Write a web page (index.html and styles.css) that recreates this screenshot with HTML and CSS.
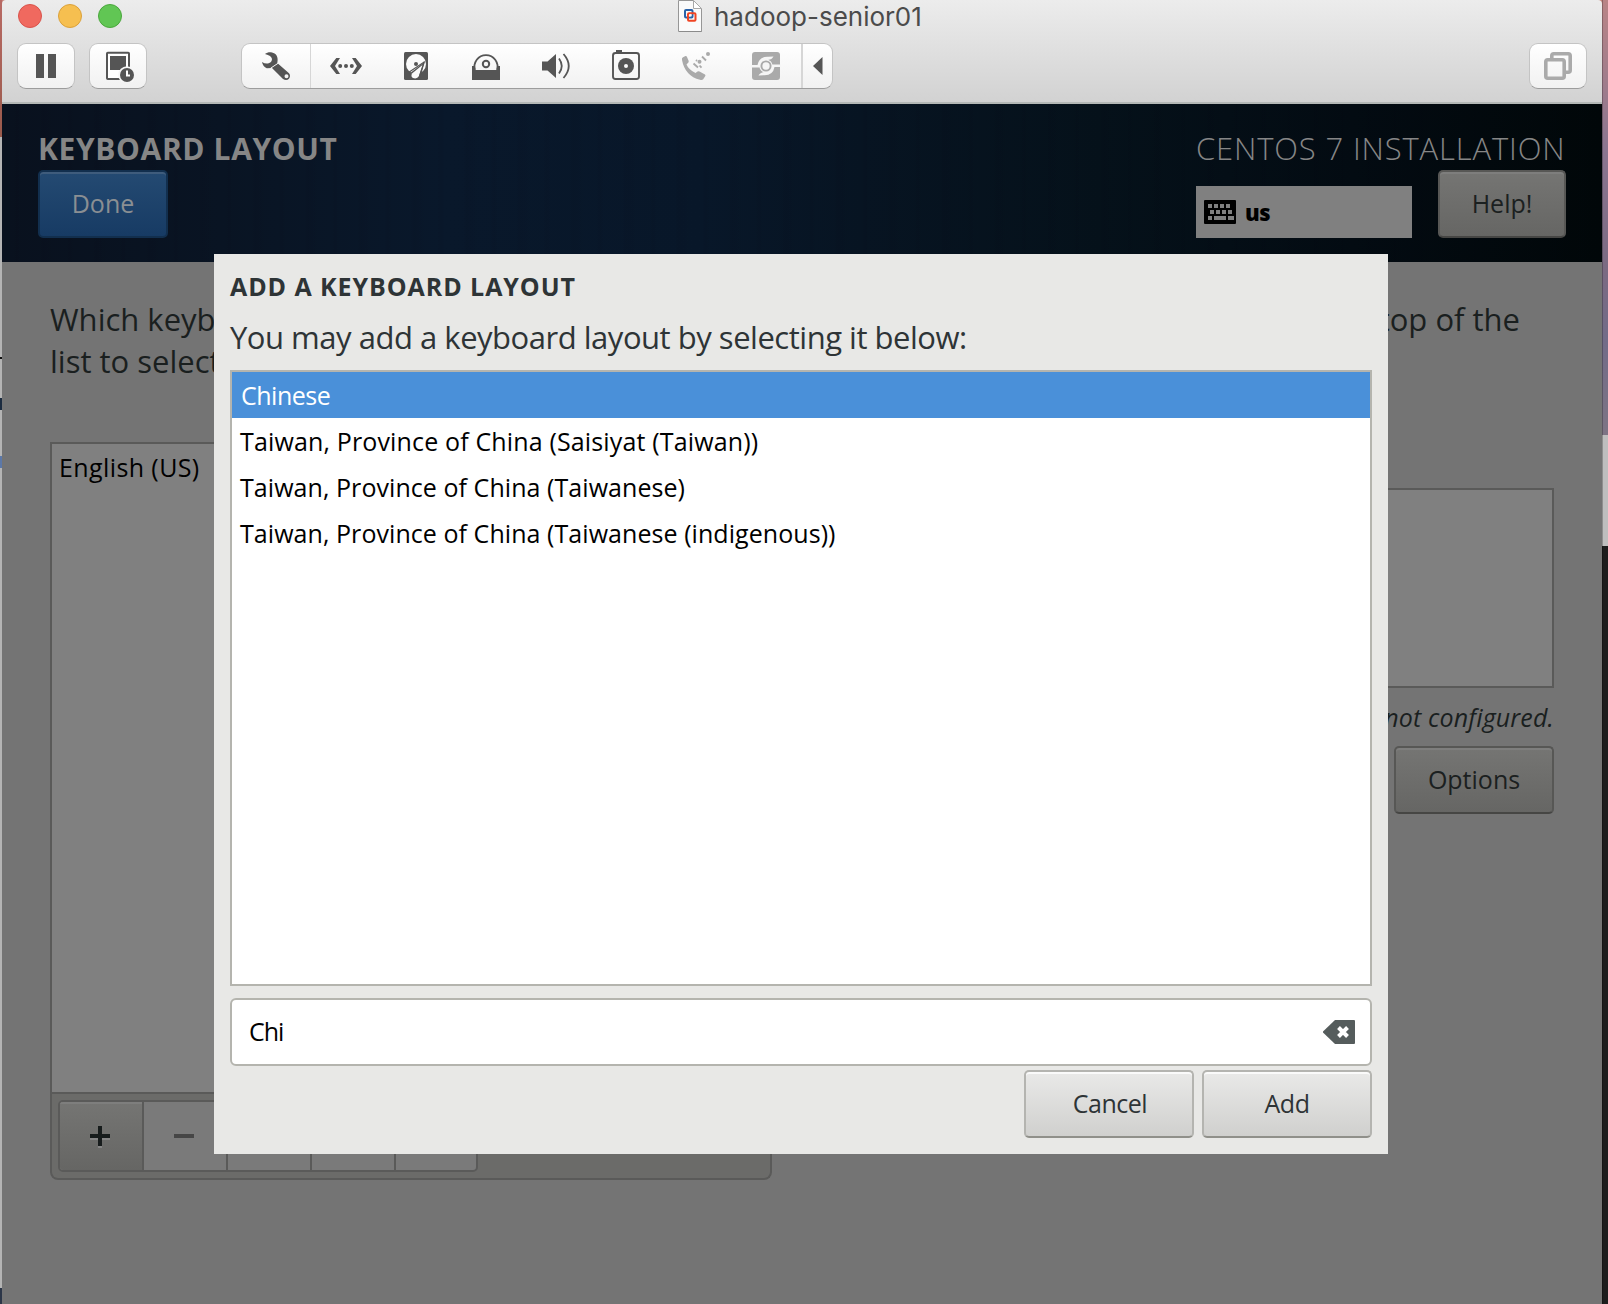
FILE: index.html
```html
<!DOCTYPE html>
<html lang="en">
<head>
<meta charset="utf-8">
<title>hadoop-senior01</title>
<link rel="stylesheet" href="styles.css">
</head>
<body>
<div class="desktop">
  <div class="edge-left"></div>
  <div class="window">
    <header class="chrome">
      <div class="titlebar">
        <div class="lights"><span class="light red"></span><span class="light yellow"></span><span class="light green"></span></div>
        <div class="title">
          <svg class="doc" width="24" height="32" viewBox="0 0 24 32"><path d="M.5.5H15.500L23.500 9V31.500H.5Z" fill="#fafafa" stroke="#969696"/><path d="M15.500.5V8.500H23.500Z" fill="#fff" stroke="#a8a8a8"/><path d="M1 31.500H23.500" stroke="#8b8b8b"/><rect x="7" y="10" width="7.500" height="7.500" rx="1" fill="none" stroke="#2a62a8" stroke-width="2"/><rect x="10" y="13.300" width="7.500" height="7.500" rx="1" fill="none" stroke="#f04423" stroke-width="2"/><path d="M11.200 16l2.200-1.400" stroke="#fafafa" stroke-width="1.800"/></svg>
          <span class="title-text">hadoop-senior01</span>
        </div>
      </div>
      <div class="toolbar">
        <div class="tool"><svg width="32" height="32" viewBox="0 0 32 32" fill="#555"><path d="M6 4h8v24H6zM18 4h8v24h-8z"/></svg></div>
        <div class="tool snapshot"><svg width="32" height="32" viewBox="0 0 32 32"><path d="M5 3.500q0-.8.8-.8H26.200q.8 0 .8.8V28.300q0 .8-.8.8H5.800q-.8 0-.8-.8Z" fill="#fff" stroke="#555" stroke-width="2"/><path d="M8 6H24V20H8Z" fill="#555"/><circle cx="25" cy="25" r="8.800" fill="#f7f7f7"/><circle cx="25" cy="25" r="7" fill="#555"/><path d="M25 20.500V25.500H28" fill="none" stroke="#fff" stroke-width="2"/></svg></div>
        <div class="devices">
          <div class="cell first"><svg width="32" height="32" viewBox="0 0 32 32" fill="#555"><path fill-rule="evenodd" d="M5 4C7 2.500 9.500 1.800 12 2.500C16 3.300 18 6.500 17.600 10.500L17.300 13L29 23.300Q31 26 29 28.700Q26.500 31 23 29L12 18L6.800 18.200Q3 17 2 12Q5 14 8 13.500Q12 12.500 12 9Q11.500 5.500 5 4ZM26.500 24.300A2 2 0 1 0 26.500 28.300A2 2 0 1 0 26.500 24.300Z"/><path d="M10.500 18.300L18.200 13.200" stroke="#fafafa" stroke-width="1"/></svg></div>
          <div class="cell"><svg width="32" height="32" viewBox="0 0 32 32" fill="#555"><path d="M6.300 8H10L5 16l5 8H6.300L0 16ZM25.700 8H22l5 8-5 8h3.700L32 16Z"/><circle cx="10.200" cy="16" r="2"/><circle cx="16" cy="16" r="2"/><circle cx="21.800" cy="16" r="2"/></svg></div>
          <div class="cell"><svg width="32" height="32" viewBox="0 0 32 32"><rect x="4" y="2" width="24" height="28" rx="1.500" fill="#555"/><circle cx="16" cy="14" r="10" fill="#fafafa"/><path d="M9 24L25 11.500L20 28H10Z" fill="#555"/><path d="M23 14.500L19 26Q17 29.500 13 28Q10.500 26.500 12 23.500Z" fill="#fafafa"/><circle cx="16" cy="14" r="2" fill="#555"/><path d="M8.500 22.500L24 12L19.500 26" fill="none" stroke="#555" stroke-width="1.100"/></svg></div>
          <div class="cell"><svg width="32" height="32" viewBox="0 0 32 32"><path d="M5 20A11.500 11.500 0 1 1 27 20" fill="none" stroke="#555" stroke-width="1.800"/><circle cx="16" cy="14" r="3.200" fill="none" stroke="#555" stroke-width="2"/><path d="M2 16H4V20H28V16H30V30H2Z" fill="#555"/></svg></div>
          <div class="cell"><svg width="32" height="32" viewBox="0 0 32 32"><path d="M2 11.500H7.500L16 4V28L7.500 20.500H2Z" fill="#555"/><path d="M19 8.500Q24.500 16 19 23.500M23.500 4Q34 16 23.500 28" fill="none" stroke="#555" stroke-width="1.800"/></svg></div>
          <div class="cell"><svg width="32" height="32" viewBox="0 0 32 32"><path d="M6 0h6v3H6z" fill="#555"/><rect x="3" y="3" width="26" height="26" rx="2.500" fill="none" stroke="#555" stroke-width="1.900"/><circle cx="16" cy="16" r="8" fill="#555"/><circle cx="16" cy="16" r="2" fill="#fafafa"/></svg></div>
          <div class="cell"><svg width="32" height="32" viewBox="0 0 32 32" fill="#aaa"><path d="M2 10Q1.500 8 3 7.200L5.500 6Q6.500 5.700 7 7L8.700 11Q9 12.500 7.700 13.300L6.500 14.500Q8.500 19.500 15.500 23L17.500 21.500Q18.300 20.800 19.500 21.500L25 24.500Q26 25.300 25 26.500L23 29.500Q22 30.300 20 29.800Q5 26 2 10Z"/><circle cx="19.500" cy="11.700" r="2"/><circle cx="28" cy="3.900" r="2"/><path d="M13.500 13.500l4.500 4M19.500 15.500l2 2.200M16 10l1 1M22 6.500l4 4" stroke="#aaa" stroke-width="1.800"/></svg></div>
          <div class="cell"><svg width="32" height="32" viewBox="0 0 32 32"><rect x="2" y="2" width="28" height="28" rx="3" fill="#aaa"/><circle cx="16" cy="16" r="6.600" fill="#f6f6f6"/><path d="M1 15H7.500Q9 6.500 18 6.800L23.500 6.500Q22 9.500 18 10L10 17.500H1ZM31 17H24.500Q23 25.500 14 25.200L8.500 25.500Q10 22.500 14 22L22 14.500H31Z" fill="#f6f6f6"/><circle cx="16" cy="16" r="4.600" fill="#f6f6f6" stroke="#aaa" stroke-width="1.900"/></svg></div>
          <div class="cell last"><svg width="10" height="18" viewBox="0 0 10 18"><path d="M0 9L9.500 0V18Z" fill="#555"/></svg></div>
        </div>
        <div class="tool full"><svg width="32" height="32" viewBox="0 0 32 32" fill="none" stroke="#aaa" stroke-width="3.600"><path d="M9.800 9V5.800q0-2 2-2H26.200q2 0 2 2V20.200q0 2-2 2H23"/><rect x="3.800" y="9.800" width="18.400" height="18.400" rx="2"/></svg></div>
      </div>
    </header>

    <main class="screen">
      <section class="banner">
        <div class="banner-left">
          <h1 class="spoke">KEYBOARD LAYOUT</h1>
          <button class="btn done">Done</button>
        </div>
        <div class="banner-right">
          <div class="product">CENTOS 7 INSTALLATION</div>
          <div class="banner-row">
            <div class="indicator">
              <svg width="32" height="24" viewBox="0 0 32 24"><rect width="32" height="24" rx="1" fill="#000"/><path d="M4 4h4v4H4zM10 4h4v4h-4zM16 4h4v4h-4zM22 4h4v4h-4zM6 10h4v4H6zM12 10h4v4h-4zM18 10h4v4h-4zM24 10h4v4h-4zM4 16h4v4H4zM10 16h12v4H10zM24 16h6v4h-6z" fill="#808080"/></svg>
              <span class="us">us</span>
            </div>
            <button class="btn dim help">Help!</button>
          </div>
        </div>
      </section>
      <section class="content">
        <div class="question">
          <p>Which keyb<br>list to select</p>
          <p class="question-end">top of the</p>
        </div>
        <div class="columns">
          <div class="layouts">
            <div class="layout-list"><span class="english">English (US)</span></div>
            <div class="layout-bar">
              <div class="bar-buttons">
                <span class="bar-btn plus"><svg width="20" height="22" viewBox="0 0 20 22"><path d="M0 10H8V2h4v8h8v4h-8v8H8v-8H0Z" fill="#858585"/><path d="M0 8H8V0h4v8h8v4h-8v8H8v-8H0Z" fill="#171c1c"/></svg></span>
                <span class="bar-btn"><svg width="20" height="4"><path d="M0 0h20v4H0z" fill="#464646"/></svg></span>
                <span class="bar-btn"></span><span class="bar-btn"></span><span class="bar-btn"></span>
              </div>
            </div>
          </div>
          <div class="testing">
            <div class="test-area"></div>
            <div class="switching">not configured.</div>
            <button class="btn dim options">Options</button>
          </div>
        </div>
      </section>

      <section class="dialog">
        <h2 class="dialog-title">ADD A KEYBOARD LAYOUT</h2>
        <p class="dialog-text">You may add a keyboard layout by selecting it below:</p>
        <ul class="results">
          <li class="row selected">Chinese</li>
          <li class="row saisiyat">Taiwan, Province of China (Saisiyat (Taiwan))</li>
          <li class="row">Taiwan, Province of China (Taiwanese)</li>
          <li class="row">Taiwan, Province of China (Taiwanese (indigenous))</li>
        </ul>
        <div class="entry">
          <span class="query">Chi</span>
          <svg width="32" height="24" viewBox="0 0 32 24"><path d="M12 0H31q1 0 1 1V23q0 1-1 1H12L0 12.500V11.500Z" fill="#555c5c"/><path d="M15.500 7.500l9 9M24.500 7.500l-9 9" stroke="#fff" stroke-width="4"/></svg>
        </div>
        <div class="actions">
          <button class="btn light-btn cancel">Cancel</button>
          <button class="btn light-btn add">Add</button>
        </div>
      </section>
    </main>
  </div>
  <div class="edge-right"></div>
</div>
</body>
</html>
```

FILE: styles.css
```css
* { box-sizing: border-box; }
body { margin: 0; font-family: "Open Sans", "Noto Sans", sans-serif; }
svg { display: block; flex: none; }
h1, h2, p, ul { margin: 0; padding: 0; font-weight: normal; }

.desktop {
  display: grid;
  grid-template-columns: 2px 1600px 6px;
  height: 1304px;
  overflow: hidden;
  background: #c4827a;
}
.edge-left {
  background:
    linear-gradient(transparent 357px, #111 357px 359px, transparent 359px 398px, #1c2c40 398px 410px, transparent 410px 456px, #5c78a8 456px 468px, transparent 468px),
    linear-gradient(#b86a64 0, #9a5a4c 137px, #b4b4b4 137px, #b4b4b4 1288px, #2c3648 1288px);
}
.edge-right {
  border-left: 1px solid rgba(0, 0, 0, .25);
  background: linear-gradient(#b98486 0, #8b7590 150px, #7b6a82 270px, #726c88 340px, #7d7484 435px, #bebebe 435px, #bebebe 546px, #1d1d1d 546px);
}
.window { display: flex; flex-direction: column; }

/* window chrome */
.chrome {
  height: 104px;
  border-bottom: 2px solid #b4b8b6;
  border-radius: 4px 4px 0 0;
  background: linear-gradient(#ececec, #d2d2d2);
}
.titlebar { display: flex; height: 43px; }
.lights { display: flex; gap: 16px; width: 676px; padding: 4px 0 0 16px; }
.light { width: 24px; height: 24px; border-radius: 50%; border: 1px solid; }
.red { background: #f0695f; border-color: #d9534b; }
.yellow { background: #f6bf50; border-color: #dba13a; }
.green { background: #61c654; border-color: #4aa73c; }
.title { display: flex; gap: 12px; }
.title-text { font: 26px/34px Inter, sans-serif; color: #4b4b4b; white-space: nowrap; }
.toolbar { display: flex; padding: 0 15px; }
.tool, .devices {
  height: 46px;
  border: 1px solid #c4c4c4;
  border-bottom-color: #9c9c9c;
  border-radius: 9px;
  background: linear-gradient(#fff, #f1f1f1);
}
.tool { display: flex; align-items: center; justify-content: center; width: 58px; }
.snapshot { margin-left: 14px; }
.devices { display: flex; width: 592px; margin-left: 94px; }
.cell { display: flex; align-items: center; justify-content: center; width: 70px; }
.first { width: 69px; border-right: 1px solid #d6d6d6; }
.last { flex: 1; border-left: 2px solid #d6d6d6; }
.full { margin-left: auto; }

/* installer screen */
.screen { position: relative; flex: 1; display: flex; flex-direction: column; background: #747474; }
.banner {
  display: flex;
  justify-content: space-between;
  height: 158px;
  padding: 29px 36px 0;
  color: #868686;
  background:
    repeating-linear-gradient(90deg, transparent 0 11px, rgba(0, 0, 15, .06) 15px, transparent 19px 37px, rgba(0, 0, 15, .06) 41px, transparent 53px),
    linear-gradient(90deg, #09111e 0, #091423 220px, #09182b 440px, #081729 700px, #071422 860px, #05111a 1100px, #030b12 1350px, #010709 1600px);
}
.spoke { height: 37px; font-size: 30px; line-height: 32px; font-weight: 700; letter-spacing: .62px; white-space: nowrap; }
.product { height: 37px; font-size: 31px; line-height: 30px; font-weight: 300; letter-spacing: .84px; white-space: nowrap; }
.banner-right { width: 370px; }
.banner-row { display: flex; align-items: flex-end; justify-content: space-between; }
.indicator { display: flex; align-items: center; gap: 9px; width: 216px; height: 52px; padding: 0 8px; background: #808080; }
.us { font-size: 22px; line-height: 30px; font-weight: 800; letter-spacing: -.4px; color: #000; }
.btn {
  display: block;
  height: 68px;
  padding: 0 0 3px;
  border: 2px solid;
  border-radius: 5px;
  font: 25px/30px "Open Sans", sans-serif;
  text-align: center;
  white-space: nowrap;
}
.done { width: 130px; color: #8a8f93; border-color: #122f4e; background: linear-gradient(#244a72, #173b64); box-shadow: inset 0 2px #3f5c7c; }
.dim { color: #1b2020; border-color: #575755 #575755 #464644; background: linear-gradient(#757573, #666664); box-shadow: inset 0 2px #7e7e7d; }
.help { width: 128px; }

.content { padding: 36px 48px 0; color: #1a1f1f; }
.question { display: flex; justify-content: space-between; height: 144px; padding-right: 34px; font-size: 31px; line-height: 42px; white-space: nowrap; }
.columns { display: flex; justify-content: space-between; }
.layouts { width: 722px; }
.layout-list { height: 652px; padding: 8px 7px; border: 2px solid #5a5a59; background: #808080; color: #000; font-size: 25px; line-height: 30px; letter-spacing: .4px; }
.layout-bar { height: 86px; padding: 6px; border: 2px solid #5a5a59; border-top: 0; border-radius: 0 0 8px 8px; background: #6b6b69; }
.bar-buttons { display: flex; width: 420px; height: 72px; border: 2px solid #5a5a59; border-radius: 5px; background: #7a7a7a; overflow: hidden; }
.bar-btn { display: flex; align-items: center; justify-content: center; width: 84px; padding-right: 2px; border-right: 2px solid #5a5a59; }
.bar-btn:last-child { border-right: 0; width: auto; flex: 1; }
.plus { padding-top: 2px; background: linear-gradient(#757573, #666664); box-shadow: inset 0 2px #7e7e7d; }
.testing { display: flex; flex-direction: column; align-items: flex-end; padding-top: 46px; }
.test-area { width: 721px; height: 200px; border: 2px solid #5a5a59; background: #808080; }
.switching { height: 58px; padding-top: 14px; font-size: 25px; line-height: 30px; font-style: italic; letter-spacing: .15px; white-space: nowrap; }
.options { width: 160px; }

/* modal dialog, drawn over the dimmed screen */
.dialog {
  position: absolute;
  left: 212px;
  top: 150px;
  width: 1174px;
  height: 900px;
  padding: 16px;
  background: #e8e8e6;
  color: #2e3436;
}
.dialog-title { height: 46px; font-size: 25px; line-height: 32px; font-weight: 700; letter-spacing: .93px; white-space: nowrap; }
.dialog-text { height: 54px; font-size: 31px; line-height: 42px; letter-spacing: -.48px; white-space: nowrap; }
.results { height: 616px; border: 2px solid #b4b4ae; background: #fff; list-style: none; }
.row { height: 46px; padding: 0 8px; font-size: 25px; line-height: 47px; letter-spacing: .06px; color: #000; white-space: nowrap; }
.saisiyat { letter-spacing: .15px; }
.selected { padding-left: 9px; letter-spacing: -.5px; background: #4a90d9; color: #fff; }
.entry { display: flex; align-items: center; justify-content: space-between; height: 68px; margin-top: 12px; padding: 0 15px 0 17px; border: 2px solid #b4b4ae; border-radius: 6px; background: #fff; color: #000; font-size: 25px; line-height: 30px; }
.query { padding-bottom: 2px; letter-spacing: -1px; }
.actions { display: flex; justify-content: flex-end; gap: 8px; margin-top: 4px; }
.light-btn { width: 170px; color: #2e3436; border-color: #b4b4b0 #b4b4b0 #90908a; background: linear-gradient(#e9e9e8, #d0d0ce); box-shadow: inset 0 2px #fafafa; letter-spacing: -.5px; }
.cancel { padding-left: 2px; }
```
